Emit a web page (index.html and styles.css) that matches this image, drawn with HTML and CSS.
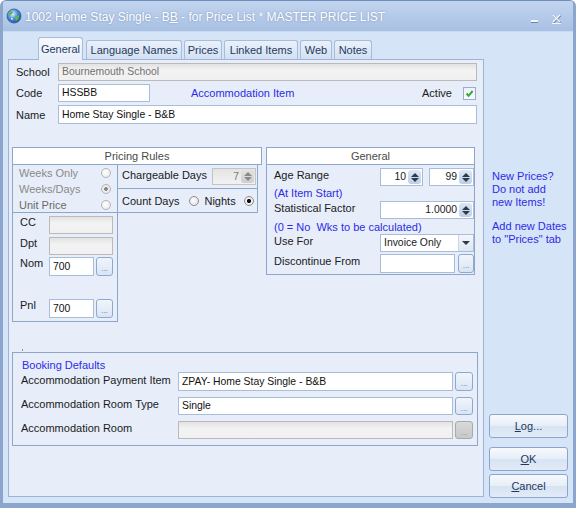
FILE: index.html
```html
<!DOCTYPE html>
<html lang="en">
<head>
    <meta charset="UTF-8">
    <title>1002 Home Stay Single - BB - for Price List</title>
    <link rel="stylesheet" href="styles.css">
</head>
<body>

<div class="window">

    <!-- Title bar -->
    <div class="titlebar">
        <svg class="app-icon" width="16" height="16" viewBox="0 0 16 16">
            <defs>
                <radialGradient id="globe" cx="40%" cy="35%" r="70%">
                    <stop offset="0" stop-color="#e8f4ff"/>
                    <stop offset="0.5" stop-color="#4f8fd8"/>
                    <stop offset="1" stop-color="#1d4f9c"/>
                </radialGradient>
            </defs>
            <circle cx="8" cy="8" r="7" fill="url(#globe)" stroke="#2b5a9a" stroke-width="0.8"/>
            <path d="M3 5 C4 3 6 3 7 4 C7 6 5 6 4 8 C3 8 2.5 6 3 5 Z" fill="#5cb84a"/>
            <path d="M9 8 C10 7 12 7 13 8 C13 10 12 12 10 13 C9 12 10 10 9 8 Z" fill="#5cb84a"/>
            <path d="M5 10 C6 9.5 7 10.5 6.5 12 C5.5 12 5 11 5 10 Z" fill="#ffffff"/>
        </svg>
        <span class="title">1002 Home Stay Single - B<u>B</u> - for Price List * MASTER PRICE LIST</span>
        <span class="caption-btns">
            <svg width="10" height="6" viewBox="0 0 10 6">
                <rect x="1" y="1" width="7" height="2" fill="#f4f7fc"/>
                <rect x="1" y="3" width="7" height="1" fill="#6b84aa"/>
            </svg>
            <svg width="14" height="12" viewBox="0 0 14 12">
                <path d="M3 2 L10 9 M10 2 L3 9" stroke="#6b84aa" stroke-width="1.6" transform="translate(0.6,0.6)"/>
                <path d="M3 2 L10 9 M10 2 L3 9" stroke="#f4f7fc" stroke-width="1.4"/>
                <rect x="2" y="10" width="9" height="1" fill="#f4f7fc"/>
            </svg>
        </span>
    </div>

    <div class="client">
        <div class="main">
            <div class="tabstrip">
                <div class="tab active" style="width:45px">General</div>
                <div class="tab" style="width:96px">Language Names</div>
                <div class="tab" style="width:38px">Prices</div>
                <div class="tab" style="width:74px">Linked Items</div>
                <div class="tab" style="width:32px">Web</div>
                <div class="tab" style="width:38px">Notes</div>
            </div>

            <div class="panel">
                <div class="row">
                    <span class="lbl">School</span>
                    <div class="field disabled grow">Bournemouth School</div>
                </div>
                <div class="row gap3">
                    <span class="lbl">Code</span>
                    <div class="field code">HSSBB</div>
                    <span class="blue item-type">Accommodation Item</span>
                    <span class="active-lbl">Active</span>
                    <span class="check">
                        <svg width="11" height="11" viewBox="0 0 11 11">
                            <path d="M2.5 5.5 L4.6 7.8 L8.6 3" fill="none" stroke="#3aa83a" stroke-width="2"/>
                        </svg>
                    </span>
                </div>
                <div class="row gap3 tall">
                    <span class="lbl">Name</span>
                    <div class="field grow">Home Stay Single - B&amp;B</div>
                </div>

                <div class="rules">
                    <!-- Pricing Rules -->
                    <div class="pricing">
                        <div class="box-head">Pricing Rules</div>
                        <div class="pricing-body">
                            <div class="pricing-left">
                                <div class="box radios">
                                    <div class="radio-row grey"><span>Weeks Only</span><i class="radio off"></i></div>
                                    <div class="radio-row grey"><span>Weeks/Days</span><i class="radio off-dot"></i></div>
                                    <div class="radio-row grey2"><span>Unit Price</span><i class="radio off"></i></div>
                                </div>
                                <div class="box codes">
                                    <div class="code-row">
                                        <span class="lbl-s">CC</span>
                                        <div class="field disabled cc"></div>
                                    </div>
                                    <div class="code-row">
                                        <span class="lbl-s">Dpt</span>
                                        <div class="field disabled cc"></div>
                                    </div>
                                    <div class="code-row nom-row">
                                        <span class="lbl-s">Nom</span>
                                        <div class="field nom">700</div>
                                        <span class="dots">...</span>
                                    </div>
                                    <div class="code-row pnl-row">
                                        <span class="lbl-s">Pnl</span>
                                        <div class="field nom">700</div>
                                        <span class="dots">...</span>
                                    </div>
                                </div>
                            </div>
                            <div class="box days">
                                <div class="days-row chargeable">
                                    <span>Chargeable Days</span>
                                    <div class="spin disabled charge">
                                        <span class="val">7</span>
                                        <span class="arrows"><i class="up"></i><i class="down"></i></span>
                                    </div>
                                </div>
                                <div class="days-row count">
                                    <span>Count Days</span>
                                    <i class="radio count-radio"></i>
                                    <span class="nights">Nights</span>
                                    <i class="radio on"></i>
                                </div>
                            </div>
                        </div>
                    </div>

                    <!-- General -->
                    <div class="box general">
                        <div class="box-head inner">General</div>
                        <div class="gen-row r1">
                            <span class="gen-lbl">Age Range</span>
                            <div class="spin age1"><span class="val">10</span><span class="arrows"><i class="up"></i><i class="down"></i></span></div>
                            <div class="spin age2"><span class="val">99</span><span class="arrows"><i class="up"></i><i class="down"></i></span></div>
                        </div>
                        <div class="gen-note blue">(At Item Start)</div>
                        <div class="gen-row r3">
                            <span class="gen-lbl">Statistical Factor</span>
                            <div class="spin factor"><span class="val">1.0000</span><span class="arrows"><i class="up"></i><i class="down"></i></span></div>
                        </div>
                        <div class="gen-note blue r4">(0 = No&nbsp; Wks to be calculated)</div>
                        <div class="gen-row r5">
                            <span class="gen-lbl">Use For</span>
                            <div class="combo"><span class="val">Invoice Only</span><span class="drop"><i class="down"></i></span></div>
                        </div>
                        <div class="gen-row r6">
                            <span class="gen-lbl">Discontinue From</span>
                            <div class="field disc"></div>
                            <span class="dots disc-btn">...</span>
                        </div>
                    </div>
                </div>

                <div class="tick"></div>

                <!-- Booking Defaults -->
                <div class="box booking">
                    <div class="blue booking-title">Booking Defaults</div>
                    <div class="book-row">
                        <span class="book-lbl">Accommodation Payment Item</span>
                        <div class="field book-field">ZPAY- Home Stay Single - B&amp;B</div>
                        <span class="dots book-btn">...</span>
                    </div>
                    <div class="book-row">
                        <span class="book-lbl">Accommodation Room Type</span>
                        <div class="field book-field short">Single</div>
                        <span class="dots book-btn short">...</span>
                    </div>
                    <div class="book-row">
                        <span class="book-lbl">Accommodation Room</span>
                        <div class="field disabled book-field short"></div>
                        <span class="dots book-btn short off">...</span>
                    </div>
                </div>
            </div>
        </div>

        <div class="side">
            <p class="note first">New Prices?<br>Do not add<br>new Items!</p>
            <p class="note">Add new Dates<br>to "Prices" tab</p>
            <div class="buttons">
                <div class="btn"><u>L</u>og...</div>
                <div class="btn ok"><u>O</u>K</div>
                <div class="btn cancel"><u>C</u>ancel</div>
            </div>
        </div>
    </div>
</div>

</body>
</html>
```

FILE: styles.css
```css
* {
    box-sizing: border-box;
}

html, body {
    margin: 0;
    padding: 0;
}

body {
    font-family: "Liberation Sans", Arial, sans-serif;
    font-size: 11px;
    color: #1a1a24;
    background: #ffffff;
}

/* Window frame */
.window {
    width: 576px;
    height: 508px;
    background: #d6e4f7;
    border: 3px solid #8ba5cc;
    border-top: 0;
    border-bottom-width: 5px;
    border-radius: 6px 6px 0 0;
    display: flex;
    flex-direction: column;
    overflow: hidden;
}

.titlebar {
    height: 32px;
    flex-shrink: 0;
    display: flex;
    align-items: center;
    padding-left: 3px;
    margin: 0 -3px;
    background: linear-gradient(#c2d5ef, #a8c0e3);
    border-top: 1px solid #6f8dba;
    border-bottom: 1px solid #c9daf1;
    border-radius: 6px 6px 0 0;
}

.app-icon {
    margin: 0 3px 1px 3px;
}

.title {
    color: #ffffff;
    font-size: 12px;
    text-shadow: 0 0 2px rgba(70, 95, 140, 0.55);
    margin-top: 1px;
}

.caption-btns {
    margin-left: auto;
    margin-right: 12px;
    display: flex;
    align-items: flex-end;
    gap: 10px;
    margin-top: 5px;
}

/* Client area */
.client {
    flex: 1;
    display: flex;
}

.main {
    width: 481px;
    padding: 5px 0 0 5px;
}

.tabstrip {
    height: 22px;
    display: flex;
    align-items: flex-end;
    gap: 2px;
    padding-left: 30px;
}

.tab {
    height: 19px;
    line-height: 18px;
    text-align: center;
    color: #1f3a60;
    border: 1px solid #a6bcda;
    border-bottom: 0;
    border-radius: 3px 3px 0 0;
    background: linear-gradient(#eaf1fa, #d3e0f2);
    white-space: nowrap;
}

.tab.active {
    height: 23px;
    line-height: 22px;
    margin-bottom: -1px;
    margin-right: 1px;
    background: linear-gradient(#f7f9fd, #e7eef9);
    position: relative;
    z-index: 1;
}

.panel {
    width: 476px;
    height: 438px;
    background: #e7eef9;
    border: 1px solid #9db4d7;
    padding: 3px 6px 0 3px;
}

/* Form rows */
.row {
    display: flex;
    align-items: center;
    height: 18px;
    padding-left: 4px;
}

.row.gap3 {
    margin-top: 3px;
}

.row.tall {
    height: 19px;
}

.lbl {
    width: 42px;
}

.field {
    height: 18px;
    background: #ffffff;
    border: 1px solid #a8bdd8;
    padding: 0 3px;
    line-height: 16px;
    font-size: 10.4px;
    color: #111111;
    white-space: nowrap;
    overflow: hidden;
}

.tall .field {
    height: 19px;
    line-height: 17px;
}

.field.disabled {
    background: linear-gradient(#e2e2e2, #f3f3f3 40%, #f0f0f0);
    border-color: #bababa;
    color: #707070;
}

.grow {
    flex: 1;
}

.code {
    width: 92px;
}

.blue {
    color: #2d2ce6;
}

.item-type {
    margin-left: 41px;
}

.active-lbl {
    margin-left: auto;
}

.check {
    width: 13px;
    height: 13px;
    margin-left: 11px;
    margin-right: 1px;
    border: 1px solid #97aed0;
    background: linear-gradient(#eef2f8, #f8fafd);
    display: flex;
    align-items: center;
    justify-content: center;
}

/* Pricing rules + General */
.rules {
    display: flex;
    gap: 4px;
    margin-top: 23px;
}

.box {
    border: 1px solid #8ea6c9;
}

.box-head {
    height: 18px;
    line-height: 16px;
    text-align: center;
    background: #ffffff;
    border: 1px solid #8ea6c9;
    color: #4a4a4a;
}

.box-head.inner {
    border: 0;
    border-bottom: 1px solid #8ea6c9;
    height: 17px;
    line-height: 17px;
}

.pricing {
    width: 250px;
}

.pricing-body {
    display: flex;
    margin-top: -1px;
}

.pricing-left {
    width: 106px;
}

.radios {
    height: 49px;
    padding: 0 6px 0 6px;
}

.radio-row {
    height: 16px;
    display: flex;
    align-items: center;
    justify-content: space-between;
}

.radio-row.grey {
    color: #8a8a8a;
}

.radio-row.grey2 {
    color: #6a6a6a;
}

.radio {
    display: block;
    width: 10px;
    height: 10px;
    border-radius: 50%;
    border: 1px solid #8c8c8c;
    background: radial-gradient(circle at 40% 40%, #ffffff, #dcdcdc);
}

.radio.off {
    border-color: #b4b4b4;
    background: radial-gradient(circle at 40% 40%, #ffffff, #e6e6e6);
}

.radio.off-dot {
    border-color: #b4b4b4;
    background: radial-gradient(circle, #8a8a8a 0 1.6px, #f0f0f0 2.2px, #e4e4e4);
}

.radio.on {
    background: radial-gradient(circle, #111111 0 1.8px, #f6f6f6 2.4px, #dedede);
}

.codes {
    height: 110px;
    margin-top: -1px;
    padding: 3px 3px 0 7px;
}

.code-row {
    display: flex;
    align-items: flex-start;
    margin-top: 3px;
}

.code-row:first-child {
    margin-top: 0;
}

.code-row.nom-row {
    margin-top: 2px;
}

.code-row.pnl-row {
    margin-top: 23px;
}

.lbl-s {
    width: 29px;
    line-height: 13px;
}

.cc {
    width: 64px;
}

.nom {
    width: 45px;
    height: 19px;
    line-height: 17px;
}

.dots {
    width: 17px;
    height: 19px;
    margin-left: 2px;
    border: 1px solid #8ea9cf;
    border-radius: 3px;
    background: linear-gradient(#f1f5fb, #d9e5f4);
    color: #5272a3;
    font-size: 8px;
    line-height: 22px;
    text-align: center;
}

.dots.off {
    background: linear-gradient(#d8d8d8, #c8c8c8);
    border-color: #a9a9a9;
    color: #8a8a8a;
}

.days {
    width: 141px;
    height: 49px;
    margin-left: -1px;
}

.days-row {
    display: flex;
    padding-left: 4px;
}

.days-row.chargeable {
    height: 24px;
    padding-top: 3px;
    padding-right: 1px;
    align-items: flex-start;
    border-bottom: 1px solid #8ea6c9;
    line-height: 14px;
}

.days-row.count {
    height: 23px;
    align-items: center;
}

.count-radio {
    margin-left: 10px;
}

.nights {
    margin-left: 5px;
    margin-right: 8px;
}

/* Spinners */
.spin {
    display: flex;
    height: 18px;
    background: #ffffff;
    border: 1px solid #a8bdd8;
    font-size: 10.4px;
}

.spin .val {
    flex: 1;
    text-align: right;
    line-height: 16px;
    padding-right: 1px;
}

.arrows {
    width: 13px;
    display: flex;
    flex-direction: column;
    align-items: center;
    justify-content: space-around;
    padding: 2px 0;
    background: linear-gradient(#dce7f5, #bccfe9);
    border-radius: 3px;
    margin: 1px;
}

.up {
    display: block;
    width: 0;
    height: 0;
    border-left: 4px solid transparent;
    border-right: 4px solid transparent;
    border-bottom: 4px solid #2f3a48;
}

.down {
    display: block;
    width: 0;
    height: 0;
    border-left: 4px solid transparent;
    border-right: 4px solid transparent;
    border-top: 4px solid #2f3a48;
}

.spin.disabled {
    background: linear-gradient(#e4e4e4, #f2f2f2);
    border-color: #c4c4c4;
    color: #7a7a7a;
}

.spin.disabled .arrows {
    background: linear-gradient(#e2e2e2, #cdcdcd);
}

.spin.disabled .up {
    border-bottom-color: #8a8a8a;
}

.spin.disabled .down {
    border-top-color: #8a8a8a;
}

.charge {
    width: 44px;
    height: 17px;
    margin-left: auto;
}

.general {
    width: 209px;
    height: 128px;
}

.gen-row {
    display: flex;
    align-items: flex-start;
    padding-left: 7px;
}

.gen-lbl {
    width: 106px;
    line-height: 14px;
}

.gen-row.r1 {
    margin-top: 3px;
}

.age1 {
    width: 43px;
}

.age2 {
    width: 45px;
    margin-left: 6px;
}

.gen-note {
    padding-left: 7px;
    line-height: 14px;
}

.gen-note.r4 {
    margin-top: 1px;
}

.gen-row.r3 {
    margin-top: 1px;
}

.factor {
    width: 94px;
}

.combo {
    width: 94px;
    height: 18px;
    display: flex;
    background: #ffffff;
    border: 1px solid #a8bdd8;
    font-size: 10.4px;
}

.combo .val {
    flex: 1;
    line-height: 16px;
    padding-left: 3px;
}

.drop {
    width: 15px;
    display: flex;
    align-items: center;
    justify-content: center;
    background: linear-gradient(#f4f7fb, #dde6f2);
    border-left: 1px solid #c9d6e8;
}

.gen-row.r6 {
    margin-top: 2px;
}

.disc {
    width: 75px;
    height: 19px;
}

.dots.disc-btn {
    width: 16px;
    margin-left: 3px;
}

/* Booking defaults */
.tick {
    width: 1px;
    height: 2px;
    margin: 27px 0 0 10px;
    background: #8a97aa;
}

.booking {
    width: 466px;
    height: 94px;
    margin-top: 1px;
    padding: 6px 0 0 8px;
}

.booking-title {
    line-height: 13px;
    margin-left: 1px;
}

.book-row {
    display: flex;
    align-items: flex-start;
    margin-top: 6px;
}

.booking-title + .book-row {
    margin-top: 0;
}

.book-lbl {
    width: 157px;
    line-height: 14px;
    margin-top: 1px;
}

.book-row + .book-row .book-lbl {
    margin-top: 0;
}

.book-field {
    width: 275px;
    height: 19px;
    line-height: 17px;
}

.book-field.short {
    height: 18px;
    line-height: 16px;
}

.book-btn {
    width: 18px;
}

.book-btn.short {
    height: 18px;
    line-height: 21px;
}

/* Right column */
.side {
    flex: 1;
    display: flex;
    flex-direction: column;
    padding: 0 0 5px 5px;
}

.note {
    margin: 11px 0 0 3px;
    line-height: 13px;
    color: #2d2ce6;
}

.note.first {
    margin-top: 138px;
}

.buttons {
    margin-top: auto;
    display: flex;
    flex-direction: column;
    gap: 3px;
}

.btn {
    width: 79px;
    height: 24px;
    line-height: 22px;
    text-align: center;
    color: #1c3a5e;
    border: 1px solid #8aa6cd;
    border-radius: 3px;
    background: linear-gradient(#f7f9fd, #e6eef8 50%, #d7e3f3 51%, #e2ebf7);
}

.btn.ok {
    margin-top: 6px;
}
```
